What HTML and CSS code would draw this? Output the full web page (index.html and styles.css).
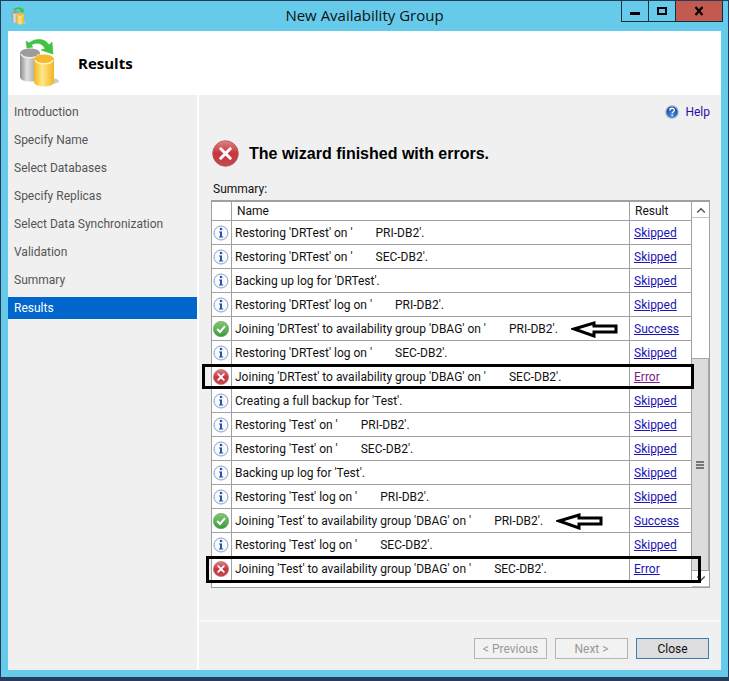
FILE: index.html
```
<!DOCTYPE html>
<html lang="en">
<head>
    <meta charset="UTF-8">
    <meta name="viewport" content="width=device-width, initial-scale=1.0">
    <title>New Availability Group</title>
    <link rel="stylesheet" href="styles.css">
</head>
<body>
    <!-- shared icons -->
    <svg class="defs" aria-hidden="true">
        <defs>
            <linearGradient id="silver"><stop offset="0" stop-color="#8c8c8c"/><stop offset="0.35" stop-color="#e0e0e0"/><stop offset="1" stop-color="#8e8e8e"/></linearGradient>
            <linearGradient id="gold"><stop offset="0" stop-color="#f3b51c"/><stop offset="0.4" stop-color="#ffe88a"/><stop offset="1" stop-color="#f2b524"/></linearGradient>
            <linearGradient id="red" x2="0" y2="1"><stop offset="0" stop-color="#dc8284"/><stop offset="0.5" stop-color="#c9353c"/><stop offset="1" stop-color="#c04a50"/></linearGradient>
            <linearGradient id="green" x2="0" y2="1"><stop offset="0" stop-color="#86c878"/><stop offset="1" stop-color="#3c9a36"/></linearGradient>
            <radialGradient id="blue" cy="0.7"><stop offset="0" stop-color="#3f9be8"/><stop offset="1" stop-color="#1c4aa8"/></radialGradient>
        </defs>
        <symbol id="databases" viewBox="0 0 40 50">
            <ellipse cx="31" cy="43" rx="8" ry="3" fill="#ccc"/>
            <path d="M0 15v24c0 6 20 6 20 0V15z" fill="url(#silver)"/>
            <ellipse cx="10" cy="15" rx="10" ry="4.500" fill="#9c9c9c"/>
            <path d="M1 16c2 5 16 5 18 0" fill="none" stroke="#f0f0f0" stroke-width="1.500"/>
            <path d="M14 21v23c0 6 20 6 20 0V21z" fill="url(#gold)"/>
            <ellipse cx="24" cy="21" rx="10" ry="4.500" fill="#f5b92c"/>
            <path d="M15 22c2 5 16 5 18 0" fill="none" stroke="#fff4c0" stroke-width="1.500"/>
            <path d="M6 3l1 7 6-1-2-2c5-3 12-2 14 4l-4 1 12 4-1-12-3 3C25 0 15 0 9 5z" fill="#3fc541" stroke="#2fae35" stroke-width="0.5"/>
        </symbol>
        <symbol id="info" viewBox="0 0 16 16">
            <circle cx="8" cy="8" r="7" fill="#f7fafd" stroke="#8ba3c2"/>
            <circle cx="8" cy="4" r="1.300" fill="#2d54b4"/>
            <path d="M6 6.500h3v5h1.200v1H5.800v-1H7v-4H6z" fill="#2d54b4"/>
        </symbol>
        <symbol id="success" viewBox="0 0 16 16">
            <circle cx="8" cy="8" r="7.700" fill="url(#green)" stroke="#5a9e55" stroke-width="0.5"/>
            <path d="M4.200 8l2.800 3 5-5.800" fill="none" stroke="#fff" stroke-width="2"/>
        </symbol>
        <symbol id="error" viewBox="0 0 16 16">
            <circle cx="8" cy="8" r="7.600" fill="url(#red)" stroke="#b35a5e" stroke-width="0.5"/>
            <path d="M5.200 5.200l5.600 5.600M10.800 5.200l-5.600 5.600" fill="none" stroke="#fff" stroke-width="1.800" stroke-linecap="round"/>
        </symbol>
        <symbol id="help" viewBox="0 0 16 16">
            <circle cx="8" cy="8" r="7" fill="url(#blue)" stroke="#9aabc6" stroke-width="1.500"/>
            <path d="M5.500 6.300c0-3.400 5.200-3.200 5.200-.4 0 1.800-2.400 1.800-2.400 3.600" fill="none" stroke="#fff" stroke-width="1.600"/>
            <circle cx="8.200" cy="11.800" r="1" fill="#fff"/>
        </symbol>
        <symbol id="arrow" viewBox="0 0 48 18">
            <path d="M3 9L23 3v3h22v6H23v4z" fill="#fff" stroke="#000" stroke-width="3"/>
        </symbol>
    </svg>

    <div class="window">
        <header class="titlebar">
            <svg class="app-icon"><use href="#databases"/></svg>
            <h1>New Availability Group</h1>
            <div class="window-buttons">
                <button aria-label="Minimize"><svg viewBox="0 0 12 10"><path d="M1 7.500h10" stroke="#000" stroke-width="3"/></svg></button>
                <button aria-label="Maximize"><svg viewBox="0 0 12 10"><path d="M2 2h8v6H2z" fill="none" stroke="#000" stroke-width="2"/></svg></button>
                <button class="close" aria-label="Close window"><svg viewBox="0 0 12 10"><path d="M2.500 1l7 8M9.500 1l-7 8" stroke="#000" stroke-width="2.200"/></svg></button>
            </div>
        </header>

        <div class="banner">
            <svg><use href="#databases"/></svg>
            <h2>Results</h2>
        </div>

        <div class="content">
            <nav>
                <ul>
                    <li><a href="#">Introduction</a></li>
                    <li><a href="#">Specify Name</a></li>
                    <li><a href="#">Select Databases</a></li>
                    <li><a href="#">Specify Replicas</a></li>
                    <li><a href="#">Select Data Synchronization</a></li>
                    <li><a href="#">Validation</a></li>
                    <li><a href="#">Summary</a></li>
                    <li><a href="#" class="active">Results</a></li>
                </ul>
            </nav>

            <main>
                <section class="results">
                    <a class="help" href="#"><svg><use href="#help"/></svg>Help</a>
                    <div class="status">
                        <svg><use href="#error"/></svg>
                        <h3>The wizard finished with errors.</h3>
                    </div>
                    <p class="label" id="summary-label">Summary:</p>
                    <div class="grid">
                        <table aria-labelledby="summary-label">
                            <thead>
                                <tr><th class="icon"></th><th>Name</th><th class="result">Result</th></tr>
                            </thead>
                            <tbody>
                                <tr><td><svg><use href="#info"/></svg></td><td>Restoring 'DRTest' on '<span class="server">PRI-DB2'.</span></td><td><a href="#">Skipped</a></td></tr>
                                <tr><td><svg><use href="#info"/></svg></td><td>Restoring 'DRTest' on '<span class="server">SEC-DB2'.</span></td><td><a href="#">Skipped</a></td></tr>
                                <tr><td><svg><use href="#info"/></svg></td><td>Backing up log for 'DRTest'.</td><td><a href="#">Skipped</a></td></tr>
                                <tr><td><svg><use href="#info"/></svg></td><td>Restoring 'DRTest' log on '<span class="server">PRI-DB2'.</span></td><td><a href="#">Skipped</a></td></tr>
                                <tr><td><svg><use href="#success"/></svg></td><td>Joining 'DRTest' to availability group 'DBAG' on '<span class="server">PRI-DB2'.</span><svg class="arrow"><use href="#arrow"/></svg></td><td><a href="#">Success</a></td></tr>
                                <tr><td><svg><use href="#info"/></svg></td><td>Restoring 'DRTest' log on '<span class="server">SEC-DB2'.</span></td><td><a href="#">Skipped</a></td></tr>
                                <tr class="marked"><td><svg><use href="#error"/></svg></td><td>Joining 'DRTest' to availability group 'DBAG' on '<span class="server">SEC-DB2'.</span></td><td><a href="#" class="visited">Error</a></td></tr>
                                <tr><td><svg><use href="#info"/></svg></td><td>Creating a full backup for 'Test'.</td><td><a href="#">Skipped</a></td></tr>
                                <tr><td><svg><use href="#info"/></svg></td><td>Restoring 'Test' on '<span class="server">PRI-DB2'.</span></td><td><a href="#">Skipped</a></td></tr>
                                <tr><td><svg><use href="#info"/></svg></td><td>Restoring 'Test' on '<span class="server">SEC-DB2'.</span></td><td><a href="#">Skipped</a></td></tr>
                                <tr><td><svg><use href="#info"/></svg></td><td>Backing up log for 'Test'.</td><td><a href="#">Skipped</a></td></tr>
                                <tr><td><svg><use href="#info"/></svg></td><td>Restoring 'Test' log on '<span class="server">PRI-DB2'.</span></td><td><a href="#">Skipped</a></td></tr>
                                <tr><td><svg><use href="#success"/></svg></td><td>Joining 'Test' to availability group 'DBAG' on '<span class="server">PRI-DB2'.</span><svg class="arrow"><use href="#arrow"/></svg></td><td><a href="#">Success</a></td></tr>
                                <tr><td><svg><use href="#info"/></svg></td><td>Restoring 'Test' log on '<span class="server">SEC-DB2'.</span></td><td><a href="#">Skipped</a></td></tr>
                                <tr class="marked wide"><td><svg><use href="#error"/></svg></td><td>Joining 'Test' to availability group 'DBAG' on '<span class="server">SEC-DB2'.</span></td><td><a href="#">Error</a></td></tr>
                            </tbody>
                        </table>
                        <div class="scrollbar">
                            <button aria-label="Scroll up"><svg viewBox="0 0 8 6"><path d="M1 5l3-3 3 3" fill="none" stroke="#555" stroke-width="1.200"/></svg></button>
                            <div class="track"></div>
                            <div class="thumb"><svg viewBox="0 0 8 8"><path d="M0 1h8M0 4h8M0 7h8" stroke="#555" stroke-width="1.500"/></svg></div>
                            <button aria-label="Scroll down"><svg viewBox="0 0 8 6"><path d="M1 1l3 3 3-3" fill="none" stroke="#555" stroke-width="1.200"/></svg></button>
                        </div>
                    </div>
                </section>
                <footer>
                    <button disabled>&lt; Previous</button>
                    <button disabled>Next &gt;</button>
                    <button class="primary">Close</button>
                </footer>
            </main>
        </div>
    </div>
</body>
</html>
```
FILE: styles.css
```
* {
    box-sizing: border-box;
}

body {
    font-family: Roboto, "Open Sans", sans-serif;
    font-size: 12px;
    line-height: 16px;
    color: #111;
    margin: 0;
    padding: 1px 1px 4px;
    min-height: 100vh;
    background-color: #293a5a;
    display: flex;
}

h1, h2, h3, p, ul {
    margin: 0;
    padding: 0;
}

svg {
    display: block;
}

button {
    font-family: inherit;
    font-size: 12px;
    padding: 0;
}

.defs {
    position: absolute;
    width: 0;
    height: 0;
}

.window {
    flex: 1;
    display: flex;
    flex-direction: column;
    background-color: #66cbea;
    padding: 0 7px 7px;
}

/* title bar */
.titlebar {
    display: grid;
    grid-template-columns: 1fr auto 1fr;
    height: 30px;
}

.app-icon {
    width: 16px;
    height: 18px;
    margin: 6px 3px;
}

.titlebar h1 {
    font-family: "Open Sans", "Noto Sans", sans-serif;
    font-size: 15px;
    font-weight: normal;
    line-height: 28px;
}

.window-buttons {
    display: flex;
    justify-self: end;
    height: 21px;
    margin-right: -2px;
    border: 1px solid #12303c;
    border-top: none;
}

.window-buttons button {
    width: 27px;
    display: flex;
    justify-content: center;
    align-items: center;
    background: none;
    border: none;
    border-right: 1px solid #12303c;
}

.window-buttons svg {
    width: 12px;
    height: 10px;
}

.window-buttons .close {
    width: 46px;
    background-color: #c35a50;
    border: none;
}

/* banner */
.banner {
    display: flex;
    align-items: center;
    gap: 18px;
    height: 64px;
    padding-left: 12px;
    background-color: white;
}

.banner svg {
    width: 40px;
    height: 50px;
}

.banner h2 {
    font-family: "Open Sans", "Noto Sans", sans-serif;
    font-size: 15px;
    color: black;
}

.content {
    flex: 1;
    display: flex;
    background-color: #f0f0f0;
}

/* steps */
nav {
    width: 191px;
    padding-top: 6px;
    border-right: 2px solid white;
}

nav ul {
    list-style: none;
    display: flex;
    flex-direction: column;
    gap: 6px;
}

nav a {
    display: block;
    padding: 3px 6px;
    color: #555;
    text-decoration: none;
}

nav a.active {
    background-color: #0066cc;
    color: white;
}

main {
    flex: 1;
    display: flex;
    flex-direction: column;
}

.results {
    flex: 1;
    padding: 9px 11px 0 12px;
}

.help {
    display: flex;
    justify-content: flex-end;
    align-items: center;
    gap: 6px;
    color: #2a10a8;
    text-decoration: none;
}

.help svg {
    width: 14px;
    height: 14px;
}

.status {
    display: flex;
    align-items: center;
    gap: 10px;
    margin-top: 20px;
    padding-left: 1px;
}

.status svg {
    width: 27px;
    height: 27px;
}

.status h3 {
    font-family: "Liberation Sans", Arial, sans-serif;
    font-size: 16px;
    color: black;
}

.label {
    margin: 14px 0 3px 2px;
}

/* summary table */
.grid {
    display: flex;
    height: 388px;
    background-color: white;
    border: 1px solid #a0a0a4;
    border-top-width: 2px;
}

table {
    flex: 1;
    table-layout: fixed;
    border-collapse: separate;
    border-spacing: 0;
    align-self: flex-start;
}

th, td {
    height: 24px;
    padding: 0 0 0 3px;
    border-right: 1px solid #a0a0a4;
    border-bottom: 1px solid #a0a0a4;
    text-align: left;
    white-space: nowrap;
}

th {
    height: 19px;
    padding-left: 5px;
    font-weight: normal;
}

th.icon {
    width: 20px;
}

th.result {
    width: 62px;
}

tr > :first-child {
    padding-left: 1px;
}

td:last-child {
    padding-left: 4px;
}

tbody tr:last-child td {
    border-bottom-color: transparent;
}

td:first-child svg {
    width: 16px;
    height: 16px;
}

td a {
    color: #1a14b4;
}

td a.visited {
    color: #7c1a90;
}

.server {
    margin-left: 23px;
}

.arrow {
    display: inline-block;
    width: 48px;
    height: 18px;
    margin: -2px 0 -2px 13px;
    vertical-align: middle;
}

/* hand drawn box round a row */
.marked {
    position: relative;
}

.marked::after {
    content: "";
    position: absolute;
    z-index: 1;
    top: -1px;
    bottom: 0;
    left: -10px;
    right: -2px;
    border: 3px solid black;
}

.marked.wide::after {
    left: -6px;
    right: -9px;
    bottom: -2px;
}

/* scroll bar */
.scrollbar {
    width: 17px;
    display: flex;
    flex-direction: column;
}

.scrollbar button {
    height: 16px;
    display: flex;
    justify-content: center;
    align-items: center;
    background-color: white;
    border: none;
    border-bottom: 1px solid #c4c4c4;
}

.scrollbar button svg {
    width: 10px;
    height: 8px;
}

.track {
    flex: 2;
}

.thumb {
    flex: 3;
    display: flex;
    justify-content: center;
    align-items: center;
    background-color: #dcdcdc;
    border: 1px solid #a8a8a8;
    border-left: none;
}

.thumb svg {
    width: 8px;
    height: 8px;
}

/* wizard buttons */
footer {
    display: flex;
    justify-content: flex-end;
    gap: 8px;
    padding: 16px 12px 11px;
    border-top: 2px solid #fafafa;
}

footer button {
    width: 73px;
    height: 21px;
    background-color: #f2f2f2;
    border: 1px solid #b4b4b4;
}

footer button:disabled {
    color: #999;
}

footer .primary {
    background-color: #dddde0;
    border-color: #3e7fae;
    color: #111;
}
```
